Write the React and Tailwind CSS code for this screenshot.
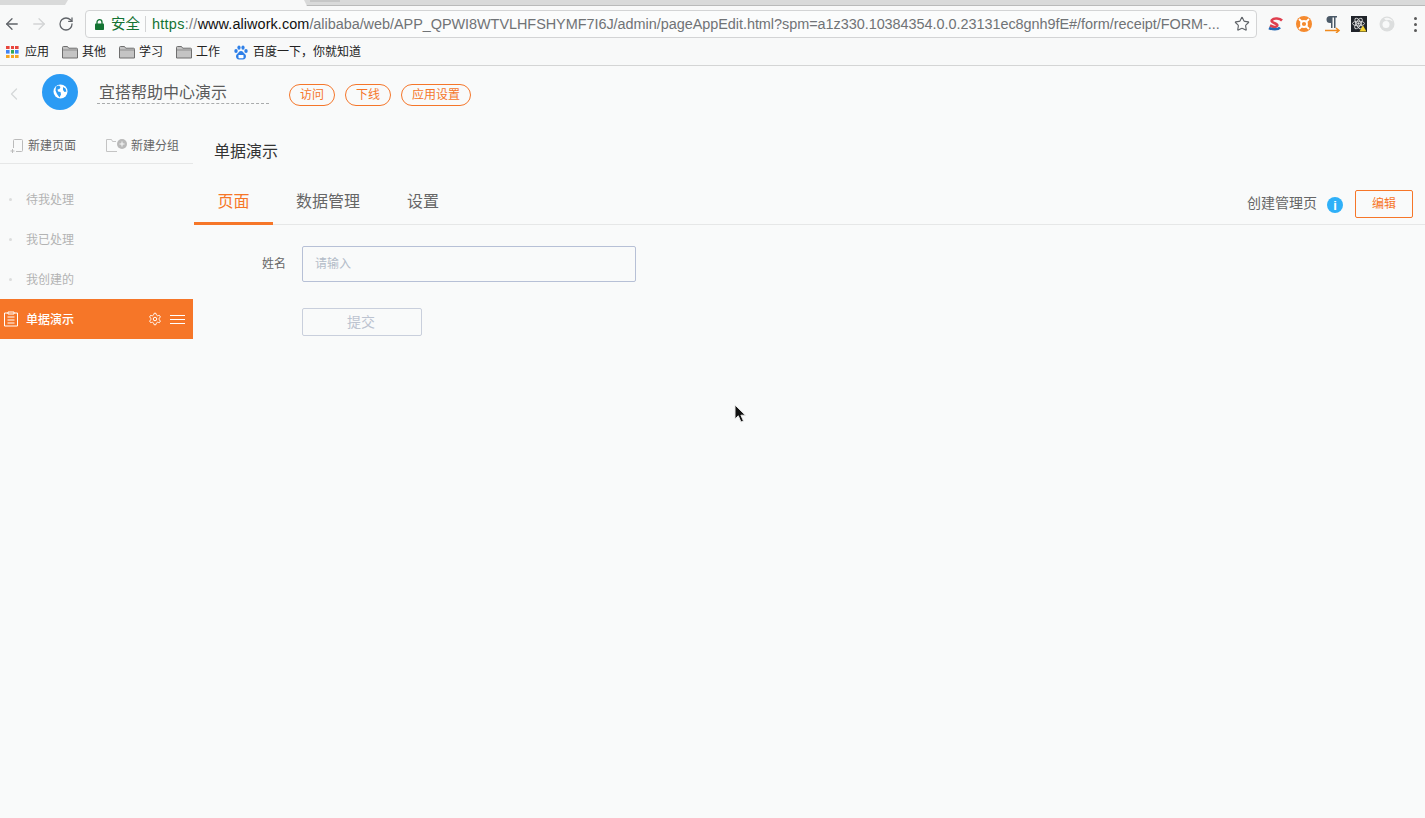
import { Star, ArrowLeft, ArrowRight, RotateCw, ChevronLeft } from "lucide-react";

const FONT = { fontFamily: '"Liberation Sans", "Noto Sans CJK SC", sans-serif' };

function AppsIcon() {
  const colors = ["#e8453c", "#e8453c", "#e8453c", "#4285f4", "#34a853", "#4285f4", "#f5a623", "#f5a623", "#f5a623"];
  return (
    <div className="grid grid-cols-3 gap-px w-[13px] h-[13px] mr-[2px]">
      {colors.map((c, i) => (
        <svg key={i} width="3.6" height="3.6" viewBox="0 0 4 4">
          <rect width="4" height="4" fill={c} />
        </svg>
      ))}
    </div>
  );
}

function FolderIcon() {
  return (
    <svg width="16" height="13" viewBox="0 0 16 13">
      <path d="M.5 12V1.5a1 1 0 0 1 1-1h4l1.2 1.7h7.8a1 1 0 0 1 1 1V12z" fill="#c4c4c4" stroke="#6f6f6f" />
      <path d="M1 4h14" stroke="#8d8d8d" />
    </svg>
  );
}

function PawIcon() {
  return (
    <svg width="14" height="15" viewBox="0 0 14 15" fill="#2f80e8" className="ml-px mr-px">
      <ellipse cx="2" cy="6" rx="1.7" ry="2.1" />
      <ellipse cx="5" cy="2.6" rx="1.6" ry="2.2" />
      <ellipse cx="9" cy="2.6" rx="1.6" ry="2.2" />
      <ellipse cx="12" cy="6" rx="1.7" ry="2.1" />
      <path d="M7 6c-2 0-2.4 1.800-3.600 2.800C2 10 1.800 11 2.200 12.400 2.700 14 4.200 14.500 7 14.500s4.300-.5 4.800-2.100c.4-1.400.2-2.400-1.200-3.600C9.400 7.800 9 6 7 6z" />
      <rect x="4.500" y="10" width="5" height="3.200" fill="#fff" rx=".6" />
    </svg>
  );
}

function Bookmark({ icon, label }) {
  return (
    <div className="flex items-center gap-[4px] text-[12px] leading-none text-[#222]">
      {icon}
      <span>{label}</span>
    </div>
  );
}

function ExtIcons() {
  return (
    <div className="flex items-center w-[168px] shrink-0 pl-[9px]">
      <svg width="16" height="14" viewBox="0 0 16 14" className="ml-[2px]">
        <path d="M14 3.500C12 1.500 6 0.500 4 3c-2 3 7 3.500 5 6-1 1.300-4 1-7-.5" fill="none" stroke="#df3f4f" strokeWidth="2.600" />
        <path d="M1 11c3 1.500 9 2 11-.5" fill="none" stroke="#2468b4" strokeWidth="2.600" />
      </svg>
      <svg width="16" height="16" viewBox="0 0 16 16" className="ml-[12px]">
        <circle cx="8" cy="8" r="8" fill="#f58a2e" />
        <circle cx="8" cy="8" r="3" fill="none" stroke="#fff" strokeWidth="1.800" />
        <path d="M3 3l3 3M13 3l-3 3M3 13l3-3M13 13l-3-3" stroke="#fff" strokeWidth="1.800" />
      </svg>
      <svg width="16" height="18" viewBox="0 0 16 18" className="ml-[13px]">
        <path d="M10 1H5a3.500 3.500 0 0 0 0 7h1v5h1.500V2.500H9V13h1.500V2.500H12V1z" fill="#4b5a68" />
        <path d="M0 15.500h13M11 13l3 2.500-3 2.500" fill="none" stroke="#f08a1d" strokeWidth="1.500" />
      </svg>
      <svg width="16" height="16" viewBox="0 0 16 16" className="ml-[10px]">
        <rect width="16" height="16" fill="#20242a" />
        <circle cx="7.500" cy="7.500" r="1.200" fill="#ddd" />
        <ellipse cx="7.500" cy="7.500" rx="6" ry="2.300" fill="none" stroke="#ddd" strokeWidth=".9" />
        <ellipse cx="7.500" cy="7.500" rx="6" ry="2.300" fill="none" stroke="#ddd" strokeWidth=".9" transform="rotate(60 7.500 7.500)" />
        <ellipse cx="7.500" cy="7.500" rx="6" ry="2.300" fill="none" stroke="#ddd" strokeWidth=".9" transform="rotate(120 7.500 7.500)" />
        <path d="M12 9.500l3.500 6h-7z" fill="#f6d32d" />
      </svg>
      <svg width="16" height="16" viewBox="0 0 16 16" className="ml-[12px]">
        <circle cx="8" cy="8" r="7.500" fill="#dcdede" />
        <circle cx="7" cy="8.500" r="3.500" fill="#f8f9f9" />
        <path d="M5 2.500c3-1.500 7-.5 9 3-2-1.500-5-2-7-1z" fill="#f6f7f7" />
      </svg>
      <div className="flex flex-col gap-[3px] ml-[19px]">
        <div className="w-[3px] h-[3px] rounded-full bg-[#5a5a5a]" />
        <div className="w-[3px] h-[3px] rounded-full bg-[#5a5a5a]" />
        <div className="w-[3px] h-[3px] rounded-full bg-[#5a5a5a]" />
      </div>
    </div>
  );
}

function BrowserBar() {
  return (
    <div className="border-b border-[#d4d5d5] bg-[#f8f9f9] h-[66px]">
      {/* tab strip */}
      <div className="flex h-[6px]">
        <div className="w-[68px] h-[5px] bg-[#d9dada] [clip-path:polygon(0_0,100%_0,calc(100%-3px)_100%,0_100%)]" />
        <div className="w-[236px]" />
        <div className="flex-1 h-[6px] bg-[#d9dada] border-b border-[#b9baba] pl-[6px] [clip-path:polygon(0_0,100%_0,100%_100%,3px_100%)]">
          <div className="w-[30px] h-[2px] bg-[#c6c7c7]" />
        </div>
      </div>
      {/* toolbar */}
      <div className="flex items-center h-[36px]">
        <div className="flex items-center w-[85px] shrink-0 pl-[3px]">
          <ArrowLeft size={18} strokeWidth={1.7} className="text-[#5f6368]" />
          <ArrowRight size={18} strokeWidth={1.7} className="text-[#d2d4d5] ml-[9px]" />
          <RotateCw size={16} strokeWidth={1.9} className="text-[#5f6368] ml-[10px]" />
        </div>
        <div className="flex-1 min-w-0 h-[28px] flex items-center border border-[#d3d4d5] rounded-[4px] bg-[#fbfcfc] text-[14.45px] leading-[20px]">
          <svg width="9" height="11" viewBox="0 0 9 11" className="ml-[9px] shrink-0">
            <path d="M2 5V3.200a2.500 2.500 0 0 1 5 0V5" fill="none" stroke="#137333" strokeWidth="1.300" />
            <rect y="4.500" width="9" height="6.500" rx=".8" fill="#137333" />
          </svg>
          <span className="text-[#137333] ml-[7px] shrink-0">安全</span>
          <div className="w-px h-[16px] bg-[#d3d4d5] ml-[5px] mr-[6px] shrink-0" />
          <div className="flex-1 whitespace-nowrap overflow-hidden">
            <span className="text-[#137333] tracking-[0.3px]">https</span>
            <span className="text-[#7a7d80] tracking-[0.3px]">://</span>
            <span className="text-[#111] tracking-[0.07px]">www.aliwork.com</span>
            <span className="text-[#707376] tracking-[-0.04px]">/alibaba/web/APP_QPWI8WTVLHFSHYMF7I6J/admin/pageAppEdit.html?spm=a1z330.10384354.0.0.23131ec8gnh9fE#/form/receipt/FORM-...</span>
          </div>
          <Star size={16} strokeWidth={1.7} className="text-[#5f6368] ml-[7px] mr-[6px] shrink-0" />
        </div>
        <ExtIcons />
      </div>
      {/* bookmarks */}
      <div className="flex items-center h-[20px] pl-[6px] gap-[13px]">
        <Bookmark icon={<AppsIcon />} label="应用" />
        <Bookmark icon={<FolderIcon />} label="其他" />
        <Bookmark icon={<FolderIcon />} label="学习" />
        <Bookmark icon={<FolderIcon />} label="工作" />
        <Bookmark icon={<PawIcon />} label="百度一下，你就知道" />
      </div>
    </div>
  );
}

function Pill({ children }) {
  return (
    <button className="h-[22px] px-[10px] rounded-full border border-[#f5762a] text-[12px] leading-none text-[#f5762a]">
      {children}
    </button>
  );
}

function AppHeader() {
  return (
    <div className="flex items-center h-[52px] pt-[2px]">
      <ChevronLeft size={20} strokeWidth={1.5} className="text-[#d5d7d8] ml-[4px] mt-[2px]" />
      <div className="w-9 h-9 rounded-full bg-[#2b9bf4] flex items-center justify-center ml-[18px] mb-[3px]">
        <svg width="15" height="15" viewBox="0 0 15 15">
          <circle cx="7.500" cy="7.500" r="7" fill="#fff" />
          <path d="M3 2.500l3-1 1.500 1.500-1 2-2 .5.5 2 2.500.5.5 2.500-1.500 3L4 10 2.500 6.500zM10 3l2.500 1.500 1 3-2 .5-1.500-2z" fill="#2b9bf4" />
        </svg>
      </div>
      <div className="ml-[19px] w-[172px] h-[22px] border-b border-dashed border-[#a9abac] pl-[2px] text-[16px] leading-[22px] text-[#5b5b5b]">
        宜搭帮助中心演示
      </div>
      <div className="flex items-center gap-[10px] ml-5 mt-[3px]">
        <Pill>访问</Pill>
        <Pill>下线</Pill>
        <Pill>应用设置</Pill>
      </div>
    </div>
  );
}

function Sidebar() {
  const items = ["待我处理", "我已处理", "我创建的"];
  return (
    <div className="w-[193px] shrink-0 pt-[10px]">
      <div className="flex items-center h-9 border-b border-[#e6e7e7] text-[12px] leading-none text-[#666]">
        <svg width="14" height="14" viewBox="0 0 14 14" fill="none" stroke="#bbb" className="ml-[10px]">
          <path d="M3.500 9V1.500a1 1 0 0 1 1-1h7a1 1 0 0 1 1 1v10a1 1 0 0 1-1 1H6M.5 12h4M2.500 10v4" />
        </svg>
        <span className="ml-[4px]">新建页面</span>
        <svg width="22" height="14" viewBox="0 0 22 14" className="ml-[30px]">
          <path d="M11 12.500H.5V.5h5l1 2H10" fill="none" stroke="#c4c4c4" />
          <circle cx="16" cy="5" r="5" fill="#b9b9b9" />
          <path d="M13.500 5h5M16 2.500v5" stroke="#f8f9f9" />
        </svg>
        <span className="ml-[3px]">新建分组</span>
      </div>
      <div className="pt-[15px]">
        {items.map((t) => (
          <div key={t} className="flex items-center h-10 text-[12px] text-[#b3b3b3]">
            <div className="w-[3px] h-[3px] rounded-full bg-[#dcdddd] ml-[9px]" />
            <span className="ml-[14px] pt-[2px]">{t}</span>
          </div>
        ))}
        <div className="flex items-center h-10 bg-[#f67628] text-[12px] font-medium text-white">
          <svg width="14" height="16" viewBox="0 0 14 16" fill="none" stroke="#fff" className="ml-[4px]">
            <path d="M4 2H.5v13h13V2H10M4 1h6v2H4zM3.500 6h7M3.500 9h7M3.500 12h7" />
          </svg>
          <span className="ml-2 pt-[2px]">单据演示</span>
          <svg width="14" height="14" viewBox="0 0 24 24" fill="none" stroke="#fff" strokeWidth="1.700" className="ml-[74px]">
            <path d="M12.220 2h-.44a2 2 0 0 0-2 2v.18a2 2 0 0 1-1 1.730l-.43.250a2 2 0 0 1-2 0l-.15-.080a2 2 0 0 0-2.730.730l-.22.380a2 2 0 0 0 .73 2.730l.15.100a2 2 0 0 1 1 1.720v.510a2 2 0 0 1-1 1.740l-.15.090a2 2 0 0 0-.73 2.730l.22.380a2 2 0 0 0 2.730.730l.15-.080a2 2 0 0 1 2 0l.43.250a2 2 0 0 1 1 1.730V20a2 2 0 0 0 2 2h.44a2 2 0 0 0 2-2v-.18a2 2 0 0 1 1-1.730l.43-.250a2 2 0 0 1 2 0l.15.080a2 2 0 0 0 2.730-.730l.22-.390a2 2 0 0 0-.73-2.730l-.15-.080a2 2 0 0 1-1-1.740v-.500a2 2 0 0 1 1-1.740l.15-.090a2 2 0 0 0 .73-2.730l-.22-.380a2 2 0 0 0-2.730-.730l-.15.080a2 2 0 0 1-2 0l-.43-.250a2 2 0 0 1-1-1.730V4a2 2 0 0 0-2-2z" />
            <circle cx="12" cy="12" r="3" />
          </svg>
          <div className="flex flex-col gap-[3px] ml-[8px]">
            <div className="w-[15px] h-px bg-white" />
            <div className="w-[15px] h-px bg-white" />
            <div className="w-[15px] h-px bg-white" />
          </div>
        </div>
      </div>
    </div>
  );
}

function Main() {
  return (
    <div className="flex-1 min-w-0">
      <div className="pl-[21px] pt-[23px] text-[16px] leading-[22px] text-[#333] h-[63px]">单据演示</div>
      <div className="flex items-center h-[45px] border-b border-[#e6e7e7] pr-3 -mt-[1px] ml-px">
        <div className="h-[45px] w-[79px] flex items-center justify-center border-b-[3px] border-[#f67628] text-[16px] text-[#f67628] pt-[3px]">页面</div>
        <div className="ml-[23px] text-[16px] text-[#666]">数据管理</div>
        <div className="ml-[47px] text-[16px] text-[#666]">设置</div>
        <div className="flex-1" />
        <span className="text-[14px] text-[#666] mt-[2px]">创建管理页</span>
        <div className="w-4 h-4 rounded-full bg-[#2fb0f8] flex items-center justify-center ml-[10px] mt-[6px]">
          <span className="text-[13px] font-bold leading-none text-white">i</span>
        </div>
        <button className="w-[58px] h-7 ml-3 mt-[4px] rounded-[2px] border border-[#f67628] text-[12px] leading-none text-[#f67628]">编辑</button>
      </div>
      <div className="pt-[21px]">
        <div className="flex items-center">
          <label className="w-[93px] text-right text-[12px] text-[#666]">姓名</label>
          <input
            placeholder="请输入"
            className="ml-[16px] w-[334px] h-9 px-[12px] rounded-[2px] border border-[#b7c0d6] bg-transparent text-[12px] placeholder:text-[#b3bcc8] outline-none"
          />
        </div>
        <div className="pl-[109px] mt-[26px]">
          <button className="w-[120px] h-7 pr-[2px] rounded-[2px] border border-[#c9cfdc] text-[14px] leading-none text-[#bcc3d0]">提交</button>
        </div>
      </div>
    </div>
  );
}

export default function App() {
  return (
    <div className="relative min-h-screen bg-[#f9fafa] overflow-hidden" style={FONT}>
      <BrowserBar />
      <AppHeader />
      <div className="flex">
        <Sidebar />
        <Main />
      </div>
      {/* mouse cursor */}
      <svg width="14" height="20" viewBox="0 0 14 20" className="absolute left-[733px] top-[404px]">
        <path d="M2 1v14l3.300-3.200L8 18l2.500-1-2.600-5.800h4.500z" fill="#111" stroke="#e8e8e8" strokeWidth="1" />
      </svg>
    </div>
  );
}
